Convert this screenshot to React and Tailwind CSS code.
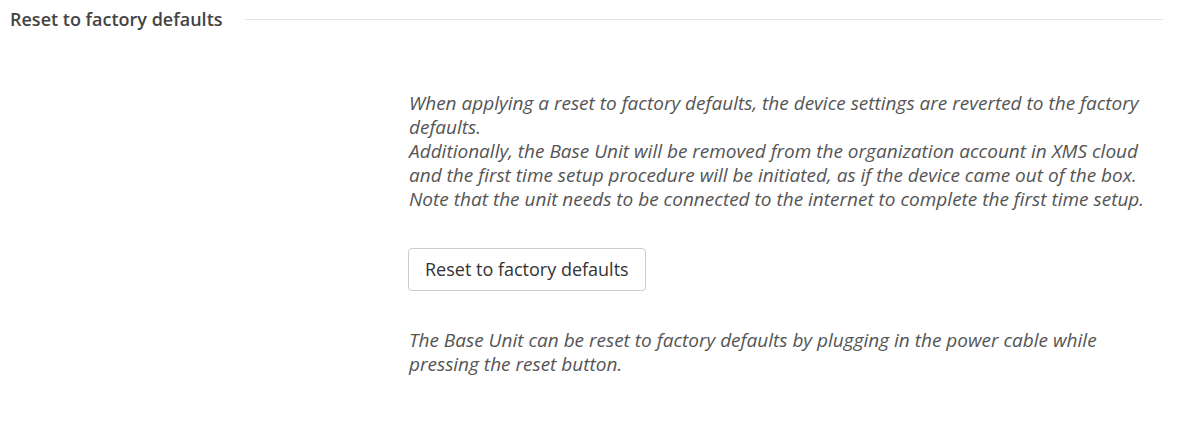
import React from "react";

function App() {
  return (
    <div className="w-[1181px] h-[431px] bg-white font-['Open_Sans',sans-serif] text-[#555]">
      <div className="flex items-center pl-[10px] pr-[18px] pt-[7px]">
        <h2 className="text-[18px] font-semibold text-[#444] leading-[24px] whitespace-nowrap">
          Reset to factory defaults
        </h2>
        <div className="flex-1 ml-[22px] border-t border-[#e6e6e6]" />
      </div>

      <div className="pl-[409px] pt-[60px]">
        <div className="w-[750px]">
          <p className="italic text-[19px] leading-[24px] text-[#555]">
            When applying a reset to factory defaults, the device settings are reverted to the factory defaults.
            <br />
            Additionally, the Base Unit will be removed from the organization account in XMS cloud and the first time
            setup procedure will be initiated, as if the device came out of the box. Note that the unit needs to be
            connected to the internet to complete the first time setup.
          </p>

          <button className="mt-[37px] h-[43px] px-[16px] border border-[#ccc] rounded-[4px] bg-white text-[18px] text-[#333] -ml-px">
            Reset to factory defaults
          </button>

          <p className="mt-[37px] italic text-[19px] leading-[24px] text-[#555]">
            The Base Unit can be reset to factory defaults by plugging in the power cable while pressing the reset
            button.
          </p>
        </div>
      </div>
    </div>
  );
}

export default App;
